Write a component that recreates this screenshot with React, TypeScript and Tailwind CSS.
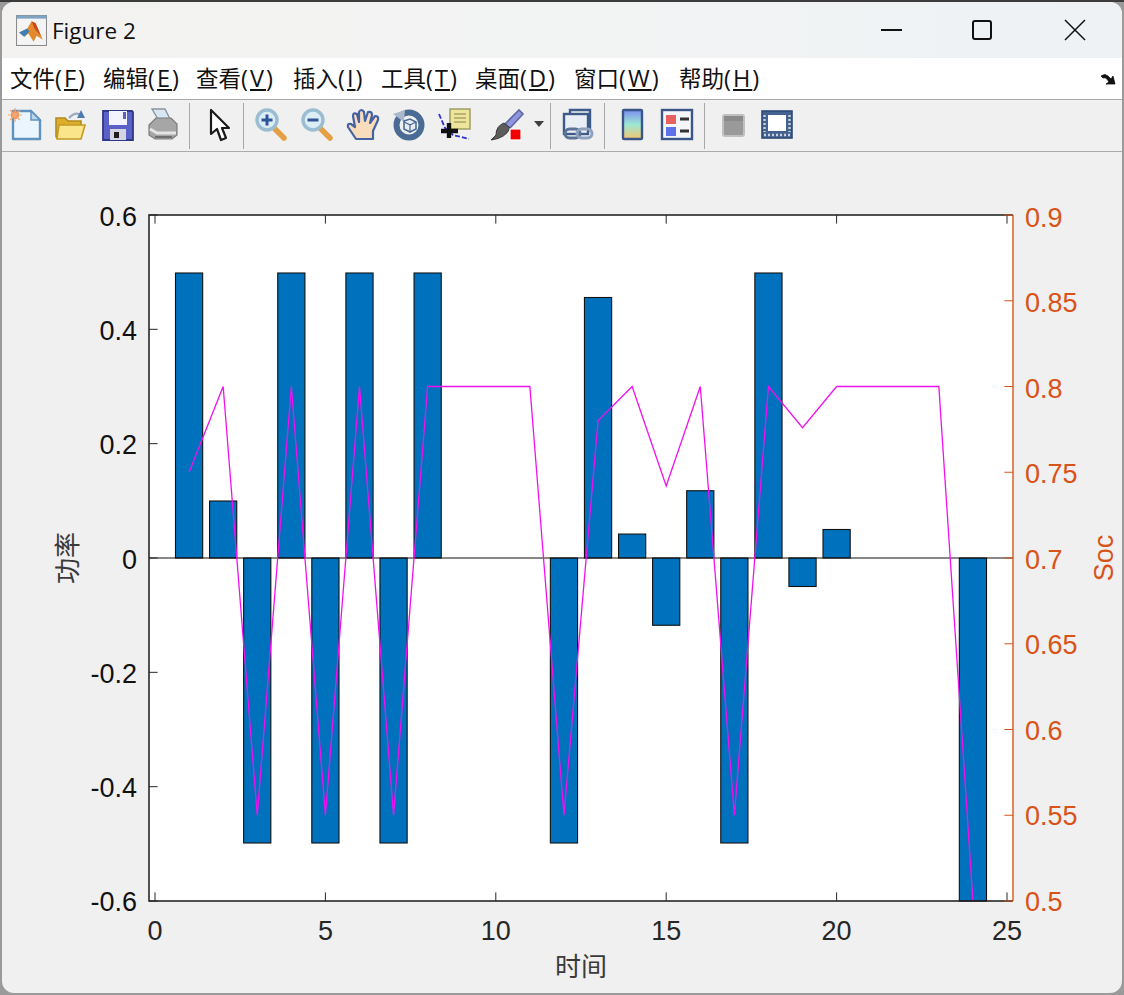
import React from "react";

const MENUS: [string, string, string][] = [
  ["文件", "F", "w-[76px]"],
  ["编辑", "E", "w-[76px]"],
  ["查看", "V", "w-[80px]"],
  ["插入", "I", "w-[71px]"],
  ["工具", "T", "w-[77px]"],
  ["桌面", "D", "w-[82px]"],
  ["窗口", "W", "w-[88px]"],
  ["帮助", "H", "w-[82px]"],
];

const BARS: [number, number][] = [
  [1, 0.5], [2, 0.1], [3, -0.5], [4, 0.5], [5, -0.5], [6, 0.5], [7, -0.5], [8, 0.5],
  [12, -0.5], [13, 0.457], [14, 0.042], [15, -0.118], [16, 0.118], [17, -0.5], [18, 0.5],
  [19, -0.05], [20, 0.05], [24, -0.6],
];

const SOC = [
  0.75, 0.8, 0.55, 0.8, 0.55, 0.8, 0.55, 0.8, 0.8, 0.8, 0.8, 0.55, 0.78, 0.8, 0.742, 0.8,
  0.55, 0.8, 0.776, 0.8, 0.8, 0.8, 0.8, 0.5,
];

const px = (x: number) => 155 + x * 34.08;
const py = (v: number) => 558 - v * 571.7;
const sy = (v: number) => 901 - (v - 0.5) * 1715;
// bars are drawn a touch shorter than the tick spacing, and clip at the axis
const barY = (v: number) => (v > 0 ? 558 - v * 570 : 558);
const barH = (v: number) => Math.abs(v) * (v === -0.6 ? 571.7 : 570);
// tick labels sit slightly lower towards the top of the axis
const labelY = (y: number) => y + 9.5 + (901 - y) / 343;

const LEFT_TICKS = [0.6, 0.4, 0.2, 0, -0.2, -0.4, -0.6];
const RIGHT_TICKS = [0.5, 0.55, 0.6, 0.65, 0.7, 0.75, 0.8, 0.85, 0.9];
const BOTTOM_TICKS = [0, 5, 10, 15, 20, 25];

const Icon = ({ className, children }: { className: string; children: React.ReactNode }) => (
  <svg viewBox="0 0 32 32" className={`w-8 h-8 shrink-0 overflow-visible ${className}`}>
    {children}
  </svg>
);

const Sep = ({ className }: { className: string }) => (
  <div className={`w-px h-[46px] -mt-[5px] shrink-0 bg-[#a8a8a8] ${className}`} />
);

const Toolbar = () => (
  <div className="flex h-[52px] pt-[8px] pl-[7px] bg-[#f0f0f0] border-b border-[#ababab]">
    {/* new */}
    <Icon className="">
      <path d="M4 3H22L31 12V31H4Z" fill="#eaf5fd" stroke="#5f92bd" strokeWidth="2.4" strokeLinejoin="round" />
      <path d="M22 3V12H31Z" fill="#bcd6ea" stroke="#5f92bd" strokeWidth="1.5" />
      <circle cx="6" cy="7" r="4" fill="#ef8a45" />
      <path d="M6 0V14M-1 7H13M1 2L11 12M11 2L1 12" stroke="#f2a777" strokeWidth="1.2" />
    </Icon>
    {/* open */}
    <Icon className="ml-[13px]">
      <path d="M2 10H11L14 13H27V30H4Q2 30 2 28Z" fill="#dcae2c" stroke="#b38a1c" strokeWidth="1.6" />
      <path d="M15 10Q21 3 27 7" fill="none" stroke="#9aa9bc" strokeWidth="2.2" />
      <path d="M27 2L31 10L23 10Z" fill="#4f7cae" />
      <path d="M5 17H31L27 31H3Z" fill="#fbe58a" stroke="#c49a22" strokeWidth="1.6" />
    </Icon>
    {/* save */}
    <Icon className="ml-[16px]">
      <path d="M1 3H30L31 4V32H1Z" fill="#5a60c8" stroke="#2f3787" strokeWidth="1.8" />
      <rect x="7" y="3" width="18" height="14" fill="#f2f3fb" />
      <rect x="21" y="4" width="3" height="7" fill="#5a60c8" />
      <rect x="8" y="21" width="16" height="11" fill="#d4d4e4" />
      <rect x="12" y="24" width="5" height="6" fill="#1e1e1e" />
    </Icon>
    {/* print */}
    <Icon className="ml-[13px]">
      <path d="M5 1H18L23 11H11Z" fill="#d7e7f3" stroke="#8c949c" strokeWidth="1.4" />
      <path d="M2 17L9 10H24L30 16V27L25 31H8L2 27Z" fill="#a6a6a6" stroke="#7c7c7c" strokeWidth="1.2" />
      <path d="M3 21L10 25H29" fill="none" stroke="#e4e4e4" strokeWidth="3" />
      <path d="M8 29H25" stroke="#6e6e6e" strokeWidth="2" />
    </Icon>
    <Sep className="ml-[10px]" />
    {/* cursor */}
    <Icon className="ml-[14px]">
      <path d="M7 2V26L13 21L17 32L22 30L18 20H25Z" fill="#fff" stroke="#1a1a1a" strokeWidth="2.2" strokeLinejoin="round" />
    </Icon>
    <Sep className="ml-[7px]" />
    {/* zoom in */}
    <Icon className="ml-[10px]">
      <path d="M19 19L30 30" stroke="#e5a043" strokeWidth="5.5" strokeLinecap="round" />
      <circle cx="13" cy="12" r="10" fill="#dcedf6" stroke="#9abdd2" strokeWidth="3.4" />
      <path d="M7.5 12H18.5M13 6.5V17.5" stroke="#2f5596" strokeWidth="3" />
    </Icon>
    {/* zoom out */}
    <Icon className="ml-[14px]">
      <path d="M19 19L30 30" stroke="#e5a043" strokeWidth="5.5" strokeLinecap="round" />
      <circle cx="13" cy="12" r="10" fill="#dcedf6" stroke="#9abdd2" strokeWidth="3.4" />
      <path d="M7.5 12H18.5" stroke="#2f5596" strokeWidth="3" />
    </Icon>
    {/* pan */}
    <Icon className="ml-[15px]">
      <path
        d="M9 31L1 19Q0 15 4 16L8 19L6 8Q6 4 10 6L12 14L12 4Q14 0 17 4L18 13L21 4Q25 3 25 7L23 15L28 8Q32 8 31 12L26 23V31Z"
        fill="#f9dcbc"
        stroke="#4462a4"
        strokeWidth="2.2"
        strokeLinejoin="round"
      />
    </Icon>
    {/* rotate */}
    <Icon className="ml-[14px]">
      <circle cx="16" cy="17" r="12.5" fill="#f0f0f0" stroke="#4a6c94" strokeWidth="6" />
      <path d="M0 6L12 2L11 14Z" fill="#a9b9cb" />
      <path d="M11 13L17 11L23 14V21L17 24L11 21Z" fill="#e8edf3" stroke="#4a6c94" strokeWidth="1.6" />
      <path d="M11 14L17 17V24M17 17L23 14" stroke="#4a6c94" strokeWidth="1.3" fill="none" />
    </Icon>
    {/* data cursor */}
    <Icon className="ml-[14px]">
      <rect x="11" y="1" width="20" height="20" fill="#ece59a" stroke="#9a9a60" strokeWidth="1.4" />
      <path d="M15 6H27M15 10H27M15 14H27" stroke="#a8a26a" strokeWidth="1.6" />
      <path d="M0 6L6 20L14 27L30 31" fill="none" stroke="#3030d0" strokeWidth="1.8" strokeDasharray="5 2" />
      <path d="M10 15V30M2 23H19" stroke="#111" strokeWidth="4.4" />
    </Icon>
    {/* brush */}
    <Icon className="ml-[20px]">
      <path d="M14 16L28 2L32 6L19 20Z" fill="#8f97dc" stroke="#5f67a8" strokeWidth="1.6" />
      <path d="M5 27Q5 18 13 15L19 20Q15 30 0 32Z" fill="#5c5c5c" stroke="#3a3a3a" strokeWidth="1" />
      <rect x="19" y="21" width="11" height="11" fill="#f40000" stroke="#fff" strokeWidth="1.2" />
    </Icon>
    <svg viewBox="0 0 12 8" className="w-3 h-2 ml-[10px] mt-[12px] shrink-0">
      <path d="M1 1H11L6 7Z" fill="#404040" />
    </svg>
    <Sep className="ml-[5px]" />
    {/* link */}
    <Icon className="ml-[11px]">
      <rect x="2" y="6" width="24" height="20" fill="#eaeff5" stroke="#3d5a8a" strokeWidth="2.4" />
      <path d="M8 6V2H28V22H25" fill="none" stroke="#3d5a8a" strokeWidth="2.4" />
      <rect x="3" y="21" width="15" height="9" rx="4.5" fill="none" stroke="#5b7396" strokeWidth="3" />
      <rect x="15" y="21" width="15" height="9" rx="4.5" fill="none" stroke="#8ea2bd" strokeWidth="3" />
    </Icon>
    <Sep className="ml-[10px]" />
    {/* colorbar */}
    <Icon className="ml-[11px]">
      <defs>
        <linearGradient id="cbar" x1="0" y1="0" x2="0" y2="1">
          <stop offset="0" stopColor="#7c8ef0" />
          <stop offset="0.5" stopColor="#9de8d4" />
          <stop offset="1" stopColor="#f6c66c" />
        </linearGradient>
      </defs>
      <rect x="7" y="2" width="19" height="29" rx="1" fill="url(#cbar)" stroke="#3a5688" strokeWidth="2.4" />
    </Icon>
    {/* legend */}
    <Icon className="ml-[13px]">
      <rect x="1" y="2" width="30" height="29" fill="#f4f6fa" stroke="#3a5688" strokeWidth="2.4" />
      <rect x="5" y="7" width="10" height="9" fill="#e86060" />
      <rect x="5" y="19" width="10" height="9" fill="#6070e8" />
      <path d="M19 11H28M19 23H28" stroke="#333" strokeWidth="3" />
    </Icon>
    <Sep className="ml-[11px]" />
    {/* hide plot tools */}
    <Icon className="ml-[12px]">
      <rect x="6" y="7" width="21" height="21" rx="2" fill="#9a9a9a" stroke="#c0c0c0" strokeWidth="2" />
      <rect x="7" y="8" width="19" height="5" fill="#8a8a8a" />
    </Icon>
    {/* show plot tools */}
    <Icon className="ml-[12px]">
      <rect x="1" y="3" width="30" height="27" fill="#44618f" stroke="#2f4a75" strokeWidth="1.6" />
      <rect x="7" y="7" width="18" height="16" fill="#ffffff" />
      <path d="M3.5 7V24M28.5 7V24M3 27H29" stroke="#c8d2e0" strokeWidth="2.4" strokeDasharray="2 2" />
    </Icon>
  </div>
);

const Chart = () => (
  <svg viewBox="2 152 1120 841" className="block w-[1120px] h-[841px]" fontFamily="'Liberation Sans', Arial, sans-serif" fontSize="27">
    <rect x="149" y="215" width="864" height="686" fill="#ffffff" />
    {BARS.map(([x, v]) => (
      <rect
        key={x}
        x={px(x) - 13.6}
        y={barY(v)}
        width={27.2}
        height={barH(v)}
        fill="#0072bd"
        stroke="#111"
        strokeWidth="1.1"
      />
    ))}
    <path d="M149 558H1013" stroke="#111" strokeWidth="1" />
    <polyline
      points={SOC.map((v, i) => `${px(i + 1)},${sy(v)}`).join(" ")}
      fill="none"
      stroke="#f010f0"
      strokeWidth="1.3"
    />
    {/* axes box */}
    <path d="M1013 215H149V901H1013" fill="none" stroke="#1a1a1a" strokeWidth="1.5" />
    <path d="M1013 215V901" stroke="#d95319" strokeWidth="1.4" />
    {BOTTOM_TICKS.map((t) => (
      <g key={t}>
        <path d={`M${px(t)} 215v8.6M${px(t)} 901v-8.6`} stroke="#262626" strokeWidth="1" />
        <text x={px(t)} y="940" textAnchor="middle" fill="#262626">
          {t}
        </text>
      </g>
    ))}
    {LEFT_TICKS.map((t) => (
      <g key={t}>
        <path d={`M149 ${py(t)}h8.6`} stroke="#262626" strokeWidth="1" />
        <text x="137" y={labelY(py(t))} textAnchor="end" fill="#111">
          {t}
        </text>
      </g>
    ))}
    {RIGHT_TICKS.map((t) => (
      <g key={t}>
        <path d={`M1013 ${sy(t)}h-8.6`} stroke="#d95319" strokeWidth="1" />
        <text x="1025" y={labelY(sy(t))} fill="#d95319">
          {t}
        </text>
      </g>
    ))}
    <text
      x="581"
      y="976"
      textAnchor="middle"
      fontSize="26"
      fill="#3a3a3a"
      fontFamily="'Noto Sans CJK SC', sans-serif"
    >
      时间
    </text>
    <text
      transform="translate(77 558) rotate(-90)"
      textAnchor="middle"
      fontSize="26"
      fill="#3a3a3a"
      fontFamily="'Noto Sans CJK SC', sans-serif"
    >
      功率
    </text>
    <text transform="translate(1113 558) rotate(-90)" textAnchor="middle" fontSize="27" fill="#d95319">
      Soc
    </text>
  </svg>
);

export default function App() {
  return (
    <div className="w-[1124px] h-[995px] overflow-hidden bg-[#9a9a9a] border-t-2 border-[#3c3c3c] pl-[2px] pr-[2px]">
      <div className="w-[1120px] h-[991px] overflow-hidden rounded-[12px] bg-[#f0f0f0]">
        {/* title bar */}
        <div className="flex items-center h-[56px] pl-[14px] bg-gradient-to-r from-[#f3f2f0] via-[#f2f3f3] to-[#eef2f5]">
          <svg viewBox="0 0 30 30" className="w-[31px] h-[31px] shrink-0">
            <rect x="0.5" y="0.5" width="29" height="29" fill="#f4f4f4" stroke="#8a8a8a" />
            <rect x="0.5" y="0.5" width="29" height="3" fill="#7fa3c4" />
            <path d="M3 17L11 13L15 6L19 8L26 24L20 20L17 26L12 18L8 21Z" fill="#e4892c" />
            <path d="M3 17L11 13L13 16L8 21Z" fill="#3f7fb8" />
            <path d="M15 6L19 8L24 20L18 13Z" fill="#c9471c" />
          </svg>
          <span className="ml-[5px] mt-[2px] text-[22.5px] text-[#111] font-['Open_Sans',sans-serif]">Figure 2</span>
          <div className="ml-auto flex items-center">
            <div className="w-[21px] h-[2px] bg-[#111]" />
            <div className="ml-[70px] w-[20px] h-[20px] rounded-[3px] border-2 border-[#111]" />
            <svg viewBox="0 0 22 22" className="ml-[72px] mr-[36px] w-[22px] h-[22px]">
              <path d="M1 1L21 21M21 1L1 21" stroke="#111" strokeWidth="1.5" />
            </svg>
          </div>
        </div>
        {/* menu bar */}
        <div className="flex items-center h-[42px] pl-[8px] pr-[6px] bg-white border-b border-[#ababab] gap-[17px] text-[22.5px] text-[#111] font-['Noto_Sans_CJK_SC',sans-serif]">
          {MENUS.map(([label, key, width]) => (
            <span key={key} className={`whitespace-nowrap ${width}`}>
              {label}
              <span className="text-[23.5px] tracking-[2px] font-['Open_Sans',sans-serif]">
                (<u>{key}</u>)
              </span>
            </span>
          ))}
          <svg viewBox="0 0 16 12" className="ml-auto w-4 h-3">
            <path d="M1 3Q5 0 8 3L11 6L13 3L15 11H6L9 9L7 6Q5 4 3 5Z" fill="#111" stroke="#111" strokeWidth="0.8" />
          </svg>
        </div>
        <Toolbar />
        <Chart />
      </div>
    </div>
  );
}
